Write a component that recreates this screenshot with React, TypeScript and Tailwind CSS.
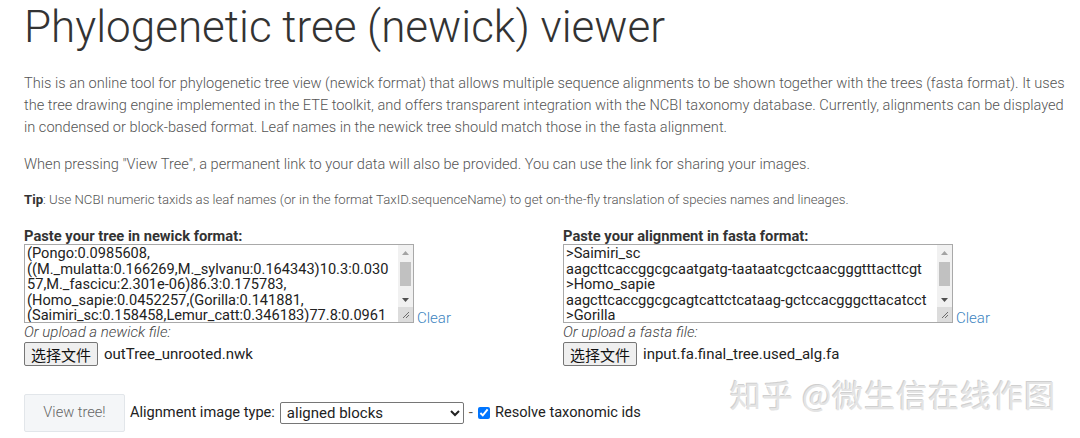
import React from "react";

const tree = [
  "(Pongo:0.0985608,",
  "((M._mulatta:0.166269,M._sylvanu:0.164343)10.3:0.030",
  "57,M._fascicu:2.301e-06)86.3:0.175783,",
  "(Homo_sapie:0.0452257,(Gorilla:0.141881,",
  "(Saimiri_sc:0.158458,Lemur_catt:0.346183)77.8:0.0961",
  "87)71.1:0.0380651,Hylobates:0.177337)0.4:0.0118",
  "4);",
].join("\n");

const fasta = [
  ">Saimiri_sc",
  "aagcttcaccggcgcaatgatg-taataatcgctcaacgggtttacttcgt",
  ">Homo_sapie",
  "aagcttcaccggcgcagtcattctcataag-gctccacgggcttacatcct",
  ">Gorilla",
  "aagcttcaccggcgcagttgttctcataag-gctcgacgggcttacatcct",
  ">Pongo",
  "aagcttcaccggcgcaaccaccctcatgat-tgctcatgggcttacatcct",
].join("\n");

// classic scrollbar drawn beside the textarea
function ScrollBar() {
  return (
    <div className="w-[15px] flex flex-col bg-[#f1f1f1]">
      <div className="h-[15px] flex items-center justify-center">
        <svg width="7" height="4" viewBox="0 0 7 4">
          <path d="M3.5 0L7 4H0z" fill="#a3a3a3" />
        </svg>
      </div>
      <div className="flex-1 px-[2px] pt-[2px]">
        <div className="h-[24px] bg-[#c1c1c1]" />
      </div>
      <div className="h-[15px] flex items-center justify-center">
        <svg width="7" height="4" viewBox="0 0 7 4">
          <path d="M0 0H7L3.5 4z" fill="#505050" />
        </svg>
      </div>
      <div className="h-[15px] flex items-center justify-center bg-[#dcdcdc]">
        <svg width="8" height="8" viewBox="0 0 8 8">
          <path d="M7 1L1 7M7 4L4 7" stroke="#6d6d6d" strokeWidth="1" />
        </svg>
      </div>
    </div>
  );
}

function InputColumn({
  label,
  value,
  upload,
  file,
}: {
  label: string;
  value: string;
  upload: string;
  file: string;
}) {
  return (
    <div className="flex flex-col">
      <label className="text-[14.7px] font-bold text-[#333] leading-[16px] font-['Roboto',sans-serif]">
        {label}
      </label>
      <div className="flex items-end gap-[3px]">
        <div className="w-[390px] h-[79px] border border-[#a9a9a9] flex bg-white">
          <textarea
            readOnly
            wrap="off"
            value={value}
            className="flex-1 min-w-0 h-full overflow-hidden whitespace-pre px-[2px] py-[1px] text-[14.6px] leading-[15.5px] text-[#222] font-['Roboto',sans-serif] resize-none outline-none"
          />
          <ScrollBar />
        </div>
        <a className="text-[15px] leading-[16px] text-[#3c84c0] font-['Roboto',sans-serif] font-light mb-[-3px]">
          Clear
        </a>
      </div>
      <div className="text-[15px] italic font-light text-[#444] leading-[19px] font-['Roboto',sans-serif]">
        {upload}
      </div>
      <div className="flex items-center gap-[6px]">
        <button className="h-[24px] px-[6px] bg-[#efefef] border border-[#767676] rounded-[2px] text-[15px] text-[#111] font-['Noto_Sans_CJK_SC',sans-serif] leading-none">
          选择文件
        </button>
        <span className="text-[15px] text-[#222] font-['Roboto',sans-serif]">{file}</span>
      </div>
    </div>
  );
}

export default function App() {
  return (
    <div className="relative w-[1080px] h-[438px] overflow-hidden bg-white pl-6 pr-2 font-['Roboto',sans-serif]">
      <h1 className="pt-[2px] text-[44px] font-light leading-[50px] text-[#333]">
        Phylogenetic tree (newick) viewer
      </h1>

      <p className="mt-[20px] text-[14.6px] font-light leading-[22px] text-[#555]">
        This is an online tool for phylogenetic tree view (newick format) that allows multiple sequence alignments to be shown together with the trees (fasta format). It uses the tree drawing engine implemented in the ETE toolkit, and offers transparent integration with the NCBI taxonomy database. Currently, alignments can be displayed in condensed or block-based format. Leaf names in the newick tree should match those in the fasta alignment.
      </p>

      <p className="mt-[15px] text-[14.6px] font-light leading-[22px] text-[#555]">
        When pressing "View Tree", a permanent link to your data will also be provided. You can use the link for sharing your images.
      </p>

      <p className="mt-[16px] text-[13.2px] font-light leading-[18px] text-[#555]">
        <b className="font-bold text-[#333]">Tip</b>: Use NCBI numeric taxids as leaf names (or in the format TaxID.sequenceName) to get on-the-fly translation of species names and lineages.
      </p>

      <div className="mt-[19px] flex">
        <div className="w-[539px]">
          <InputColumn
            label="Paste your tree in newick format:"
            value={tree}
            upload="Or upload a newick file:"
            file="outTree_unrooted.nwk"
          />
        </div>
        <InputColumn
          label="Paste your alignment in fasta format:"
          value={fasta}
          upload="Or upload a fasta file:"
          file="input.fa.final_tree.used_alg.fa"
        />
      </div>

      <div className="mt-[28px] flex items-center gap-[5px] text-[14.6px] text-[#222]">
        <button className="w-[101px] h-[38px] bg-[#f4f6f8] border border-[#e2e6ea] rounded-[2px] text-[14.6px] font-light text-[#666]">
          View tree!
        </button>
        <span>Alignment image type:</span>
        <select
          defaultValue="block"
          className="w-[184px] h-[22px] border border-[#767676] rounded-[2px] text-[15px] text-[#222] px-[2px] bg-white"
        >
          <option value="block">aligned blocks</option>
          <option value="condensed">condensed</option>
        </select>
        <span className="text-[#555]">-</span>
        <input type="checkbox" defaultChecked className="w-[12px] h-[12px] accent-[#0075ff] m-0" />
        <span>Resolve taxonomic ids</span>
      </div>

      <div className="absolute left-[730px] top-[376px] text-[31px] leading-[36px] tracking-[1px] text-[#e4e4e4] font-['Noto_Sans_CJK_SC',sans-serif] [text-shadow:1px_1px_0_#ffffff,-1px_-1px_0_#cfcfcf] pointer-events-none">
        知乎 @微生信在线作图
      </div>
    </div>
  );
}
